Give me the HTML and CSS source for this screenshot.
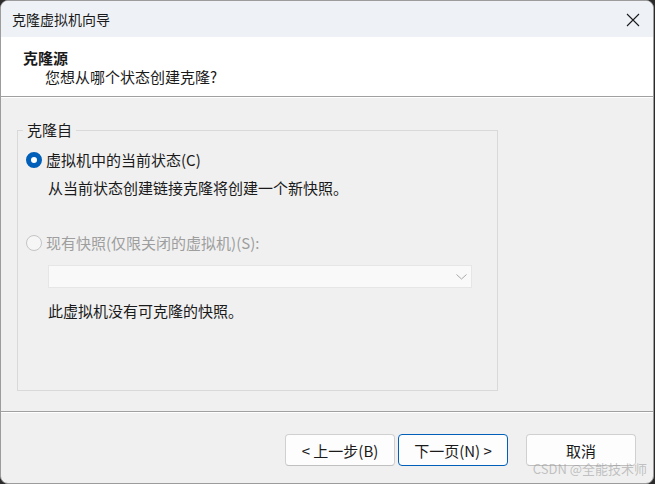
FILE: index.html
```html
<!DOCTYPE html>
<html lang="zh-CN">
  <head>
    <meta charset="UTF-8" />
    <meta name="viewport" content="width=device-width, initial-scale=1.0" />
    <title>克隆虚拟机向导</title>
    <link rel="stylesheet" href="styles.css">
  </head>
  <body>
    <div class="window">
      <!-- Barra de titulo -->
      <div class="titlebar">
        <span class="title">克隆虚拟机向导</span>
        <span class="close">
          <svg width="14" height="14" viewBox="0 0 14 14">
            <path d="M1 1 L13 13 M13 1 L1 13" stroke="#1a1a1a" stroke-width="1.1" fill="none" />
          </svg>
        </span>
      </div>

      <div class="header">
        <div class="header-title">克隆源</div>
        <div class="header-sub">您想从哪个状态创建克隆?</div>
      </div>

      <div class="content">
        <fieldset class="group">
          <legend>克隆自</legend>
          <label class="option">
            <span class="radio checked"></span>虚拟机中的当前状态(C)
          </label>
          <p class="hint hint-first">从当前状态创建链接克隆将创建一个新快照。</p>

          <label class="option option-second disabled">
            <span class="radio"></span>现有快照(仅限关闭的虚拟机)(S):
          </label>
          <div class="combo">
            <svg width="11" height="6" viewBox="0 0 11 6">
              <path d="M0.5 0.5 L5.5 5 L10.5 0.5" stroke="#a8a8a8" stroke-width="1" fill="none" />
            </svg>
          </div>
          <p class="hint hint-last">此虚拟机没有可克隆的快照。</p>
        </fieldset>
      </div>

      <div class="footer">
        <button class="btn">&lt; 上一步(B)</button>
        <button class="btn btn-default">下一页(N) &gt;</button>
        <button class="btn btn-cancel">取消</button>
      </div>

      <div class="watermark">CSDN @全能技术师</div>
    </div>
  </body>
</html>
```

FILE: styles.css
```css
body {
  margin: 0;
  padding: 0;
  background-color: #2b2b2b;
  font-family: "Noto Sans CJK SC", "Noto Sans", sans-serif;
  font-size: 15px;
  color: #1a1a1a;
}

.window {
  position: relative;
  box-sizing: border-box;
  width: 654px;
  height: 484px;
  border: 1px solid #9c9c9c;
  border-radius: 8px;
  overflow: hidden;
  display: flex;
  flex-direction: column;
  background: #f0f0f0;
}

.titlebar {
  height: 36px;
  flex: none;
  display: flex;
  align-items: center;
  justify-content: space-between;
  background-color: #eef2f7;
  padding: 0 13px 0 11px;
}

.title {
  font-size: 14px;
  line-height: 20px;
}

.close {
  display: flex;
  margin-top: 2px;
}

.header {
  flex: none;
  box-sizing: border-box;
  height: 60px;
  background: #fff;
  border-bottom: 1px solid #a0a0a0;
  padding: 11px 0 0 22px;
}

.header-title {
  font-weight: bold;
  line-height: 20px;
}

.header-sub {
  line-height: 18px;
  padding-left: 22px;
}

.content {
  flex: 1;
  border-top: 1px solid #fff;
  padding-top: 22px;
}

.group {
  box-sizing: border-box;
  width: 481px;
  height: 271px;
  margin: 0 0 0 16px;
  padding: 0 0 0 8px;
  border: 1px solid #d9d9d9;
}

.group legend {
  margin-left: -3px;
  padding: 0 4px;
  line-height: 20px;
}

.option {
  display: flex;
  align-items: center;
  line-height: 20px;
  margin-top: 10px;
}

.option-second {
  margin-top: 35px;
}

.radio {
  box-sizing: border-box;
  width: 16px;
  height: 16px;
  border-radius: 50%;
  margin-right: 4px;
  border: 1px solid #c4c4c4;
  background: #f6f6f6;
}

.radio.checked {
  border: 5px solid #005fb8;
  background: #fff;
}

.disabled {
  color: #9e9e9e;
}

.hint {
  margin: 8px 0 0 22px;
  line-height: 20px;
}

.hint-last {
  margin-top: 13px;
}

.combo {
  box-sizing: border-box;
  width: 424px;
  height: 23px;
  margin: 12px 0 0 22px;
  background: #f9f9f9;
  border: 1px solid #e6e6e6;
  display: flex;
  align-items: center;
  justify-content: flex-end;
  padding-right: 4px;
}

.footer {
  flex: none;
  box-sizing: border-box;
  height: 72px;
  border-top: 1px solid #a0a0a0;
  box-shadow: inset 0 1px #fff;
  padding: 22px 17px 0 0;
  display: flex;
  justify-content: flex-end;
  align-items: flex-start;
}

.btn {
  width: 110px;
  height: 32px;
  margin-left: 3px;
  border: 1px solid #d0d0d0;
  border-bottom-color: #c0c0c0;
  border-radius: 4px;
  background: #fdfdfd;
  font-family: inherit;
  font-size: 15px;
  color: #1a1a1a;
  padding: 0;
}

.btn-default {
  border: 1px solid #005fb8;
}

.btn-cancel {
  margin-left: 18px;
}

.watermark {
  position: absolute;
  right: 6px;
  bottom: 5px;
  font-size: 13px;
  line-height: 18px;
  color: rgba(150, 150, 150, 0.55);
}
```
